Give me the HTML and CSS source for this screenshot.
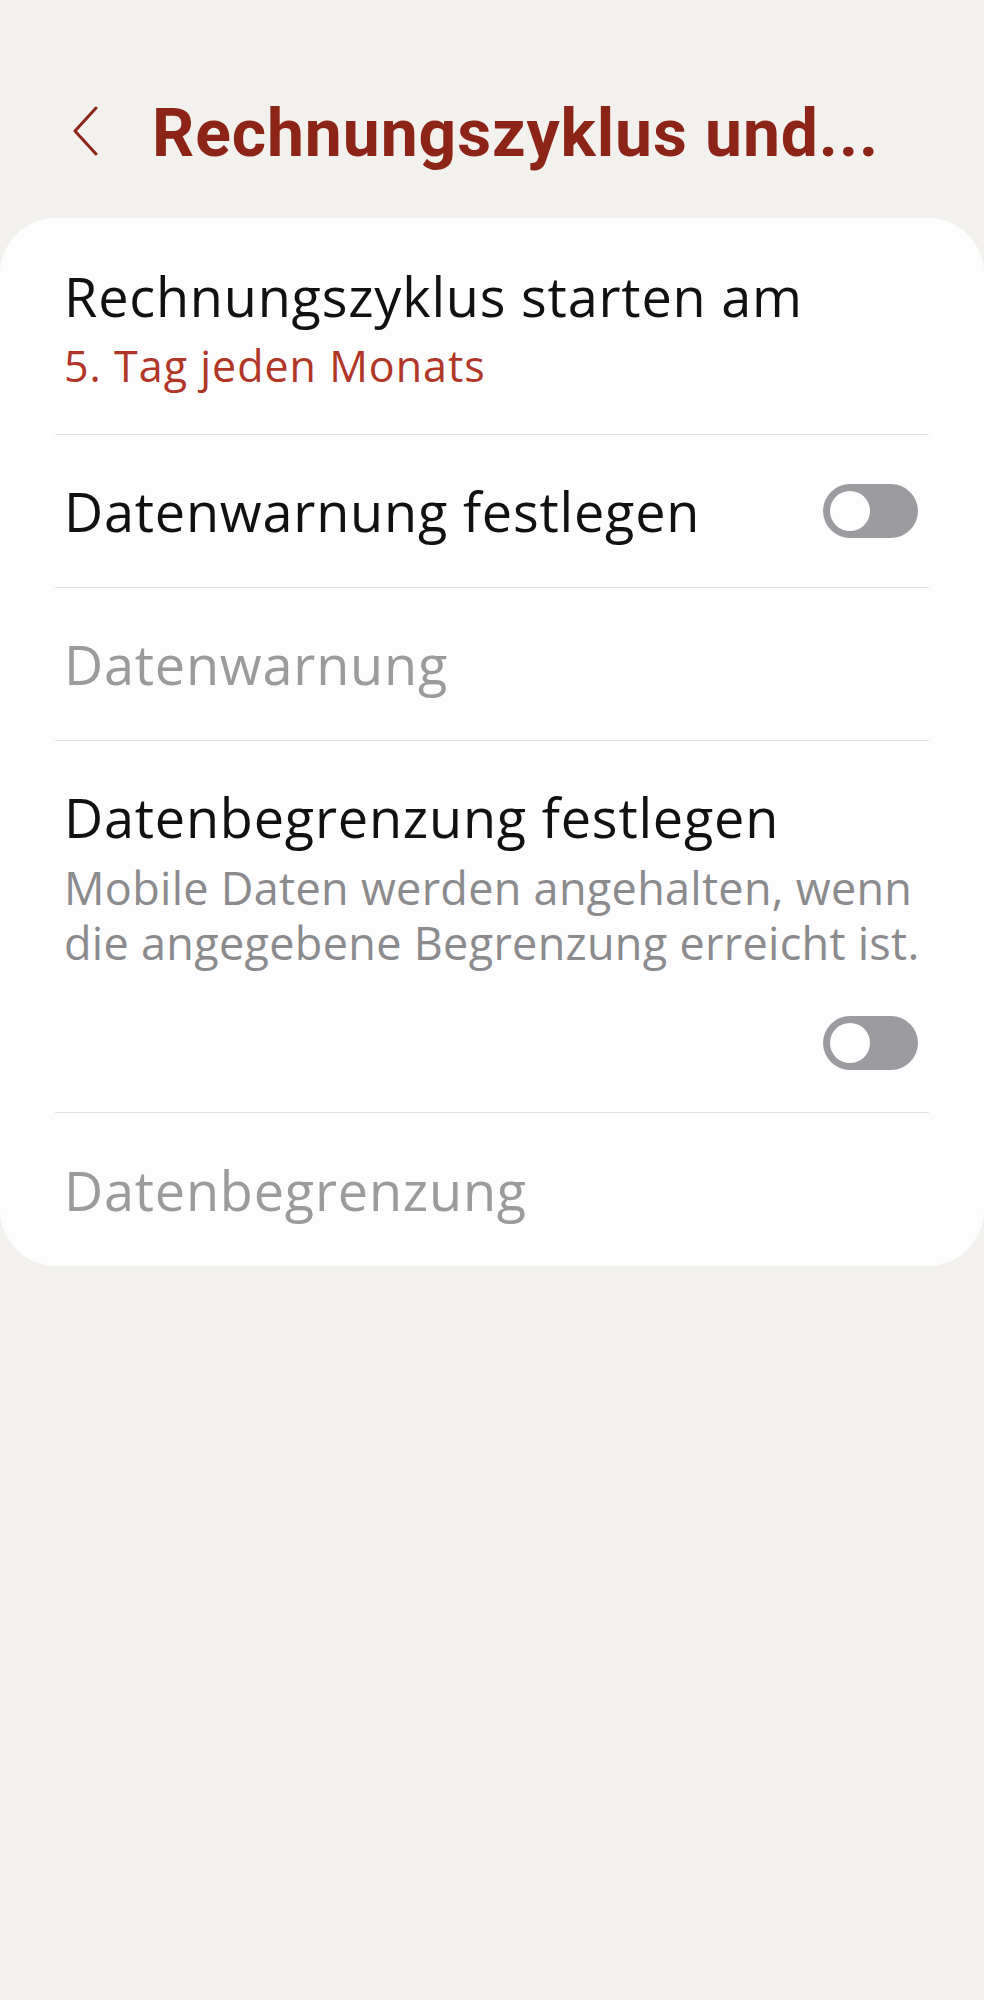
FILE: index.html
```html
<!DOCTYPE html>
<html>
<head>
    <title>Rechnungszyklus und Datenwarnung</title>
    <link rel="stylesheet" href="styles.css">
</head>
<body>

<div class="header">
    <button class="back">
        <svg width="26" height="50" viewBox="0 0 26 50">
            <polyline points="24,2 3,25 24,48" fill="none" stroke="#8c2417" stroke-width="3" stroke-linecap="round" stroke-linejoin="round"/>
        </svg>
    </button>
    <h1 class="title">Rechnungszyklus und...</h1>
</div>

<div class="card">
    <div class="row row-first">
        <div class="label">Rechnungszyklus starten am</div>
        <div class="value">5. Tag jeden Monats</div>
    </div>

    <div class="row row-single">
        <div class="label">Datenwarnung festlegen</div>
        <div class="switch"><span class="knob"></span></div>
    </div>

    <div class="row row-single">
        <div class="label disabled">Datenwarnung</div>
    </div>

    <div class="row row-limit">
        <div class="label">Datenbegrenzung festlegen</div>
        <div class="desc">Mobile Daten werden angehalten, wenn<br>die angegebene Begrenzung erreicht ist.</div>
        <div class="switch"><span class="knob"></span></div>
    </div>

    <div class="row row-single row-last">
        <div class="label disabled">Datenbegrenzung</div>
    </div>
</div>

</body>
</html>
```

FILE: styles.css
```css
body {
    margin: 0;
    background-color: #f3f1ee;
    font-family: "Open Sans", "Noto Sans", sans-serif;
}

.header {
    display: flex;
    align-items: center;
    padding: 94px 0 44px 72px;
}

.back {
    background: none;
    border: none;
    padding: 0;
    width: 26px;
    height: 50px;
    margin-top: -6px;
    cursor: pointer;
}

.back svg {
    display: block;
}

.title {
    margin: 0 0 0 54px;
    font-family: Roboto, sans-serif;
    font-size: 66px;
    line-height: 80px;
    font-weight: 700;
    letter-spacing: 0.9px;
    color: #8c2417;
    white-space: nowrap;
}

.card {
    background-color: #fdfdfd;
    border-radius: 56px;
    padding: 0 55px;
}

.row {
    border-bottom: 1px solid #e2e2e2;
    padding: 0 11px 0 9px;
}

.row-last {
    border-bottom: none;
    min-height: 150px;
}

.row-first {
    padding-top: 48px;
    padding-bottom: 40px;
}

.row-single {
    display: flex;
    align-items: center;
    justify-content: space-between;
    min-height: 153px;
    box-sizing: border-box;
}

.row-limit {
    display: flex;
    flex-direction: column;
    padding-top: 46px;
    padding-bottom: 42px;
}

.label {
    font-size: 54px;
    line-height: 60px;
    letter-spacing: 0.8px;
    color: #111;
    white-space: nowrap;
}

.label.disabled {
    color: #9b9b9b;
}

.value {
    margin-top: 12px;
    font-size: 43px;
    line-height: 56px;
    letter-spacing: 1px;
    color: #b03627;
}

.desc {
    margin-top: 13px;
    font-size: 45px;
    line-height: 55px;
    letter-spacing: 0.3px;
    color: #8b8b8d;
    white-space: nowrap;
}

.switch {
    position: relative;
    width: 95px;
    height: 54px;
    border-radius: 27px;
    background-color: #9b9ba0;
    flex-shrink: 0;
}

.row-limit .switch {
    align-self: flex-end;
    margin-top: 46px;
}

.knob {
    position: absolute;
    left: 7px;
    top: 7px;
    width: 40px;
    height: 40px;
    border-radius: 50%;
    background-color: #fdfdfd;
}
```
